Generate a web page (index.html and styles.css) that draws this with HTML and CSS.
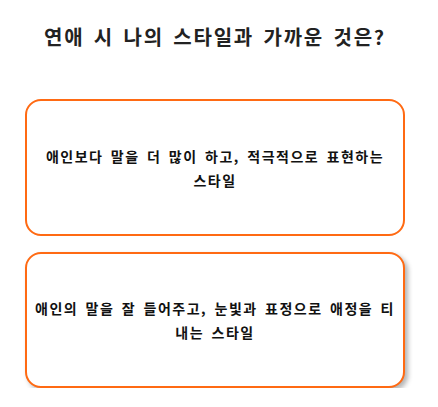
FILE: index.html
```html
<!DOCTYPE html>
<html lang="ko">
<head>
    <meta charset="UTF-8">
    <meta name="viewport" content="width=device-width, initial-scale=1.0">
    <title>연애 스타일 테스트</title>
    <link rel="stylesheet" href="styles.css">
</head>
<body>
    <div class="quiz">
        <h2 class="question">연애 시 나의 스타일과 가까운 것은?</h2>

        <div class="answers">
            <button class="answer">애인보다 말을 더 많이 하고, 적극적으로 표현하는 스타일</button>
            <button class="answer hover">애인의 말을 잘 들어주고, 눈빛과 표정으로 애정을 티 내는 스타일</button>
        </div>
    </div>
</body>
</html>
```

FILE: styles.css
```css
body {
    font-family: 'Noto Sans CJK KR', 'Noto Sans', sans-serif;
    background: #fff;
    margin: 0;
    color: #222;
}
.quiz {
    width: 380px;
    padding: 0 0 0 25px;
}
.question {
    margin: 24px 0 0 0;
    font-size: 20px;
    line-height: 26px;
    font-weight: bold;
    letter-spacing: 1.8px;
    word-spacing: 2px;
    text-align: center;
}
.answers {
    display: flex;
    flex-direction: column;
    gap: 16px;
    margin-top: 49px;
}
.answer {
    font-family: inherit;
    background: white;
    color: #111;
    border: 2px solid #ff6a13;
    border-radius: 16px;
    height: 137px;
    padding: 0 7px;
    font-size: 14px;
    line-height: 24px;
    font-weight: bold;
    letter-spacing: 1.5px;
    word-spacing: 2px;
    word-break: keep-all;
    text-align: center;
    cursor: pointer;
}
.answer.hover {
    height: 136px;
    box-shadow: 3px 3px 5px rgba(0,0,0,0.3);
}
```
